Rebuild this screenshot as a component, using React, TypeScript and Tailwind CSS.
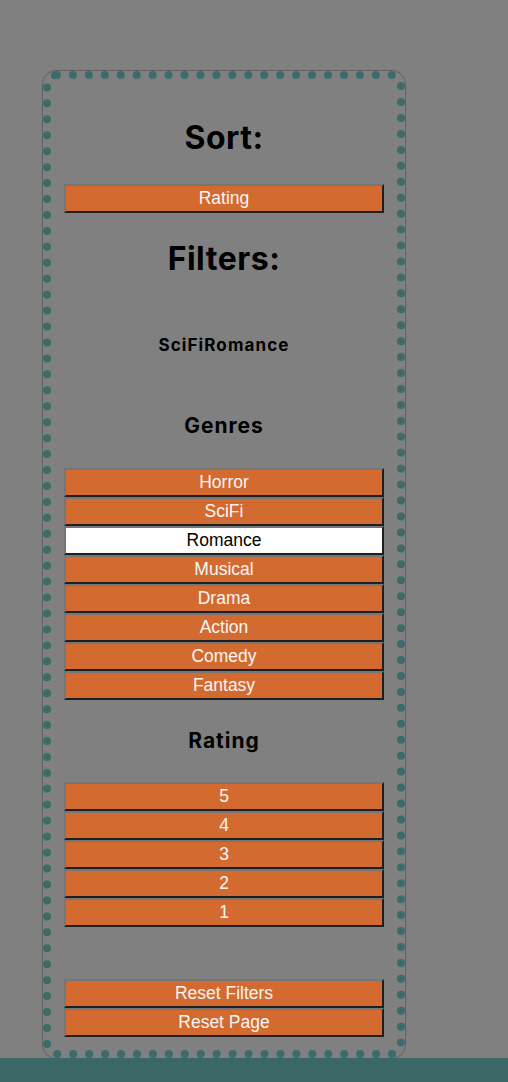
import React from 'react';

const genres = ['Horror', 'SciFi', 'Romance', 'Musical', 'Drama', 'Action', 'Comedy', 'Fantasy'];
const ratings = ['5', '4', '3', '2', '1'];
const selected = ['Romance'];

function FilterButton({ label, active = false }: { label: string; active?: boolean }) {
  return (
    <button
      className={
        'block mx-auto w-[320px] h-[29px] border-2 border-t-[#767676] border-l-[#767676] border-b-[#1f1f1f] border-r-[#1f1f1f] text-[17.5px] leading-none font-["Liberation_Sans",Arial,sans-serif] ' +
        (active ? 'bg-white text-black' : 'bg-[#d36b30] text-[#f6f6f6]')
      }
    >
      {label}
    </button>
  );
}

export default function App() {
  return (
    <div className="min-h-screen flex flex-col bg-[#808080] font-['Inter',sans-serif]">
      <main className="flex-1 pt-[71px] pl-[43px]">
        <aside className="w-[362px] h-[987px] border-8 border-dotted border-[#3b6c69] rounded-[14px] shadow-[0_0_1px_1px_rgba(0,0,0,0.25)] text-center">
          <h2 className="mt-[39px] text-[32px] leading-[40px] font-bold text-black tracking-[0.5px]">Sort:</h2>
          <div className="mt-[26px]">
            <FilterButton label="Rating" />
          </div>

          <h2 className="mt-[26px] text-[32px] leading-[40px] font-bold text-black tracking-[0.5px]">Filters:</h2>
          <p className="mt-[56px] text-[17px] leading-[20px] font-bold text-black tracking-[1.1px]">{selected.length ? 'SciFiRomance' : ''}</p>

          <h3 className="mt-[59px] text-[21px] leading-[24px] font-bold text-black tracking-[1px]">Genres</h3>
          <div className="mt-[30px]">
            {genres.map((g) => (
              <FilterButton key={g} label={g} active={g === 'Romance'} />
            ))}
          </div>

          <h3 className="mt-[29px] text-[21px] leading-[24px] font-bold text-black tracking-[1px]">Rating</h3>
          <div className="mt-[29px]">
            {ratings.map((r) => (
              <FilterButton key={r} label={r} />
            ))}
          </div>

          <div className="mt-[52px]">
            <FilterButton label="Reset Filters" />
            <FilterButton label="Reset Page" />
          </div>
        </aside>
      </main>
      <footer className="h-[24px] bg-[#3b6866]" />
    </div>
  );
}
